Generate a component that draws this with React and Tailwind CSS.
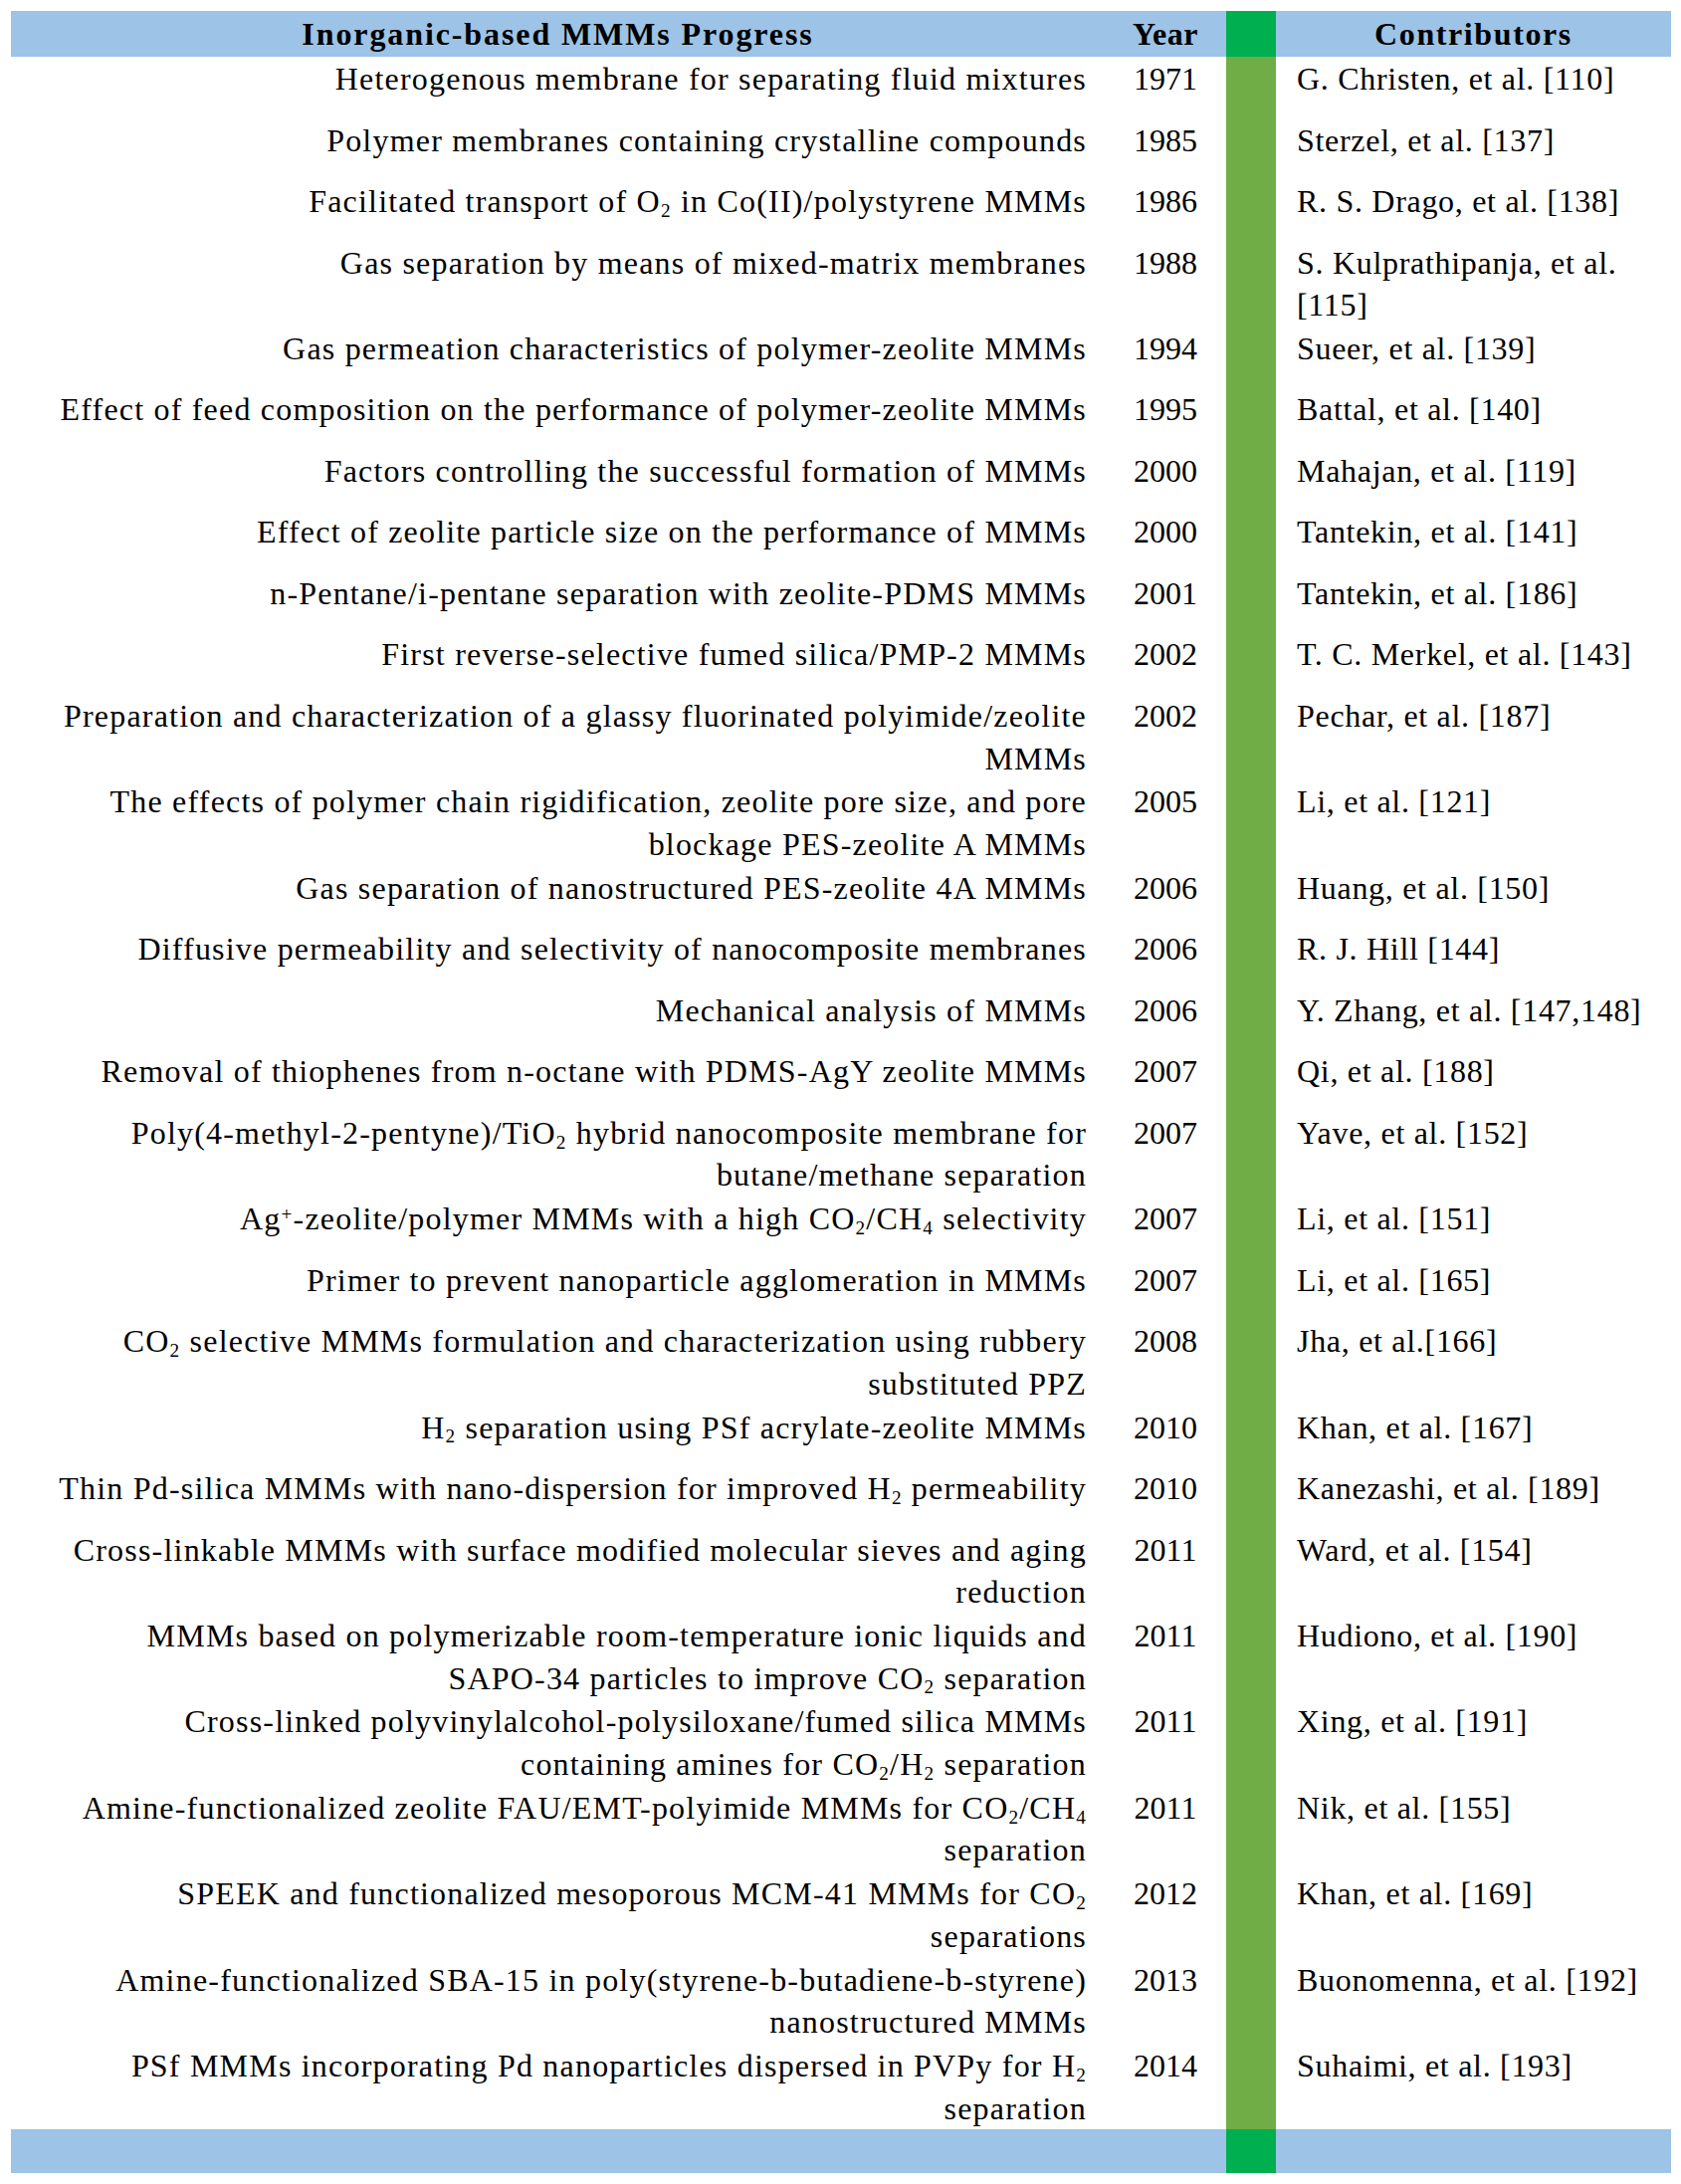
const S = ({ children }) => <sub className="text-[60%]">{children}</sub>
const P = ({ children }) => <sup className="text-[60%]">{children}</sup>

const ROWS = [
  { d: ['Heterogenous membrane for separating fluid mixtures'], y: '1971', c: ['G. Christen, et al. [110]'] },
  { d: ['Polymer membranes containing crystalline compounds'], y: '1985', c: ['Sterzel, et al. [137]'] },
  { d: [<>Facilitated transport of O<S>2</S> in Co(II)/polystyrene MMMs</>], y: '1986', c: ['R. S. Drago, et al. [138]'] },
  { d: ['Gas separation by means of mixed-matrix membranes'], y: '1988', c: ['S. Kulprathipanja, et al.', '[115]'] },
  { d: ['Gas permeation characteristics of polymer-zeolite MMMs'], y: '1994', c: ['Sueer, et al. [139]'] },
  { d: ['Effect of feed composition on the performance of polymer-zeolite MMMs'], y: '1995', c: ['Battal, et al. [140]'] },
  { d: ['Factors controlling the successful formation of MMMs'], y: '2000', c: ['Mahajan, et al. [119]'] },
  { d: ['Effect of zeolite particle size on the performance of MMMs'], y: '2000', c: ['Tantekin, et al. [141]'] },
  { d: ['n-Pentane/i-pentane separation with zeolite-PDMS MMMs'], y: '2001', c: ['Tantekin, et al. [186]'] },
  { d: ['First reverse-selective fumed silica/PMP-2 MMMs'], y: '2002', c: ['T. C. Merkel, et al. [143]'] },
  { d: ['Preparation and characterization of a glassy fluorinated polyimide/zeolite', 'MMMs'], y: '2002', c: ['Pechar, et al. [187]'] },
  { d: ['The effects of polymer chain rigidification, zeolite pore size, and pore', 'blockage PES-zeolite A MMMs'], y: '2005', c: ['Li, et al. [121]'] },
  { d: ['Gas separation of nanostructured PES-zeolite 4A MMMs'], y: '2006', c: ['Huang, et al. [150]'] },
  { d: ['Diffusive permeability and selectivity of nanocomposite membranes'], y: '2006', c: ['R. J. Hill [144]'] },
  { d: ['Mechanical analysis of MMMs'], y: '2006', c: ['Y. Zhang, et al. [147,148]'] },
  { d: ['Removal of thiophenes from n-octane with PDMS-AgY zeolite MMMs'], y: '2007', c: ['Qi, et al. [188]'] },
  { d: [<>Poly(4-methyl-2-pentyne)/TiO<S>2</S> hybrid nanocomposite membrane for</>, 'butane/methane separation'], y: '2007', c: ['Yave, et al. [152]'] },
  { d: [<>Ag<P>+</P>-zeolite/polymer MMMs with a high CO<S>2</S>/CH<S>4</S> selectivity</>], y: '2007', c: ['Li, et al. [151]'] },
  { d: ['Primer to prevent nanoparticle agglomeration in MMMs'], y: '2007', c: ['Li, et al. [165]'] },
  { d: [<>CO<S>2</S> selective MMMs formulation and characterization using rubbery</>, 'substituted PPZ'], y: '2008', c: ['Jha, et al.[166]'] },
  { d: [<>H<S>2</S> separation using PSf acrylate-zeolite MMMs</>], y: '2010', c: ['Khan, et al. [167]'] },
  { d: [<>Thin Pd-silica MMMs with nano-dispersion for improved H<S>2</S> permeability</>], y: '2010', c: ['Kanezashi, et al. [189]'] },
  { d: ['Cross-linkable MMMs with surface modified molecular sieves and aging', 'reduction'], y: '2011', c: ['Ward, et al. [154]'] },
  { d: ['MMMs based on polymerizable room-temperature ionic liquids and', <>SAPO-34 particles to improve CO<S>2</S> separation</>], y: '2011', c: ['Hudiono, et al. [190]'] },
  { d: ['Cross-linked polyvinylalcohol-polysiloxane/fumed silica MMMs', <>containing amines for CO<S>2</S>/H<S>2</S> separation</>], y: '2011', c: ['Xing, et al. [191]'] },
  { d: [<>Amine-functionalized zeolite FAU/EMT-polyimide MMMs for CO<S>2</S>/CH<S>4</S></>, 'separation'], y: '2011', c: ['Nik, et al. [155]'] },
  { d: [<>SPEEK and functionalized mesoporous MCM-41 MMMs for CO<S>2</S></>, 'separations'], y: '2012', c: ['Khan, et al. [169]'] },
  { d: ['Amine-functionalized SBA-15 in poly(styrene-b-butadiene-b-styrene)', 'nanostructured MMMs'], y: '2013', c: ['Buonomenna, et al. [192]'] },
  { d: [<>PSf MMMs incorporating Pd nanoparticles dispersed in PVPy for H<S>2</S></>, 'separation'], y: '2014', c: ['Suhaimi, et al. [193]'] },
]

export default function App() {
  return (
    <div className="w-[1689px] min-h-[2194px] bg-white pt-[11px] pl-[11px] text-black font-['Liberation_Serif',serif] text-[32px]">
      <div className="grid w-[1668px] grid-cols-[1099px_122px_50px_397px]">
        {/* Header */}
        <div className="h-[46px] bg-[#9dc3e6] flex items-center justify-center font-bold tracking-[1.9px]">
          Inorganic-based MMMs Progress
        </div>
        <div className="h-[46px] bg-[#9dc3e6] flex items-center justify-center font-bold tracking-[0.5px]">Year</div>
        <div className="h-[46px] bg-[#00b050]" />
        <div className="h-[46px] bg-[#9dc3e6] flex items-center justify-center font-bold tracking-[1.6px]">Contributors</div>

        {/* Body */}
        {ROWS.map((r, i) => (
          <div key={i} className="contents">
            <div className="min-h-[61.5px] pr-[18px] pt-[1px] text-right leading-[42.7px] tracking-[1.2px] whitespace-nowrap">
              {r.d.map((l, j) => <div key={j}>{l}</div>)}
            </div>
            <div className="min-h-[61.5px] pt-[1px] text-center leading-[42.7px]">{r.y}</div>
            <div className="bg-[#70ad47]" />
            <div className="min-h-[61.5px] pl-[21px] pt-[1px] leading-[42.7px] tracking-[0.7px] whitespace-nowrap">
              {r.c.map((l, j) => <div key={j}>{l}</div>)}
            </div>
          </div>
        ))}

        {/* Footer */}
        <div className="h-[44px] bg-[#9dc3e6]" />
        <div className="h-[44px] bg-[#9dc3e6]" />
        <div className="h-[44px] bg-[#00b050]" />
        <div className="h-[44px] bg-[#9dc3e6]" />
      </div>
    </div>
  )
}
